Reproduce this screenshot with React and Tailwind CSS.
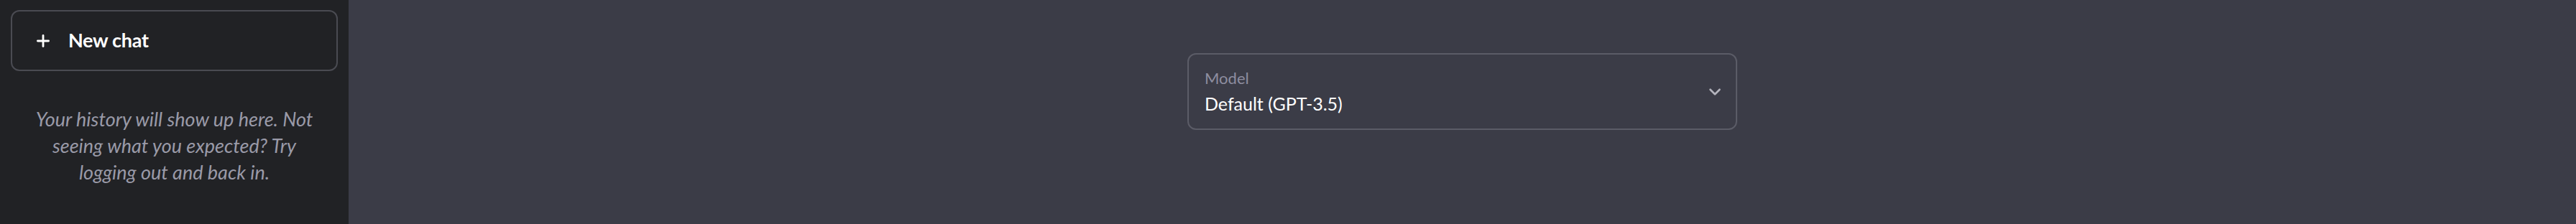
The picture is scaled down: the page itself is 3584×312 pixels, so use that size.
import { Plus, ChevronDown } from 'lucide-react'

const App = () => {
  return (
    <div className="flex h-[312px] w-full overflow-hidden bg-[#3b3c47]" style={{ fontFamily: 'Lato, "Open Sans", sans-serif' }}>
      {/* Sidebar */}
      <aside className="w-[485px] shrink-0 bg-[#212225] px-[15px] pt-[14px]">
        <button className="flex h-[85px] w-full items-center gap-[22px] rounded-[12px] border-2 border-[#4a4b52] pl-[30px] text-white">
          <Plus className="h-[26px] w-[26px]" strokeWidth={2.6} />
          <span className="text-[27px] font-bold tracking-[-0.3px]">New chat</span>
        </button>
        <p className="mt-[48px] px-[20px] text-center text-[27px] italic leading-[37px] text-[#9a9aa8]">
          Your history will show up here. Not seeing what you expected? Try logging out and back in.
        </p>
      </aside>

      {/* Main */}
      <main className="flex flex-1 justify-center">
        <div className="mt-[74px] flex h-[107px] w-[765px] items-center justify-between rounded-[12px] border-2 border-[#5b5c67] pl-[22px] pr-[16px]">
          <div className="flex flex-col gap-[4px]">
            <span className="text-[22px] leading-[28px] text-[#8e8ea0]">Model</span>
            <span className="text-[25px] leading-[34px] text-white">Default (GPT-3.5)</span>
          </div>
          <ChevronDown className="h-[26px] w-[26px] text-[#b4b4bd]" strokeWidth={2.4} />
        </div>
      </main>
    </div>
  )
}

export default App
